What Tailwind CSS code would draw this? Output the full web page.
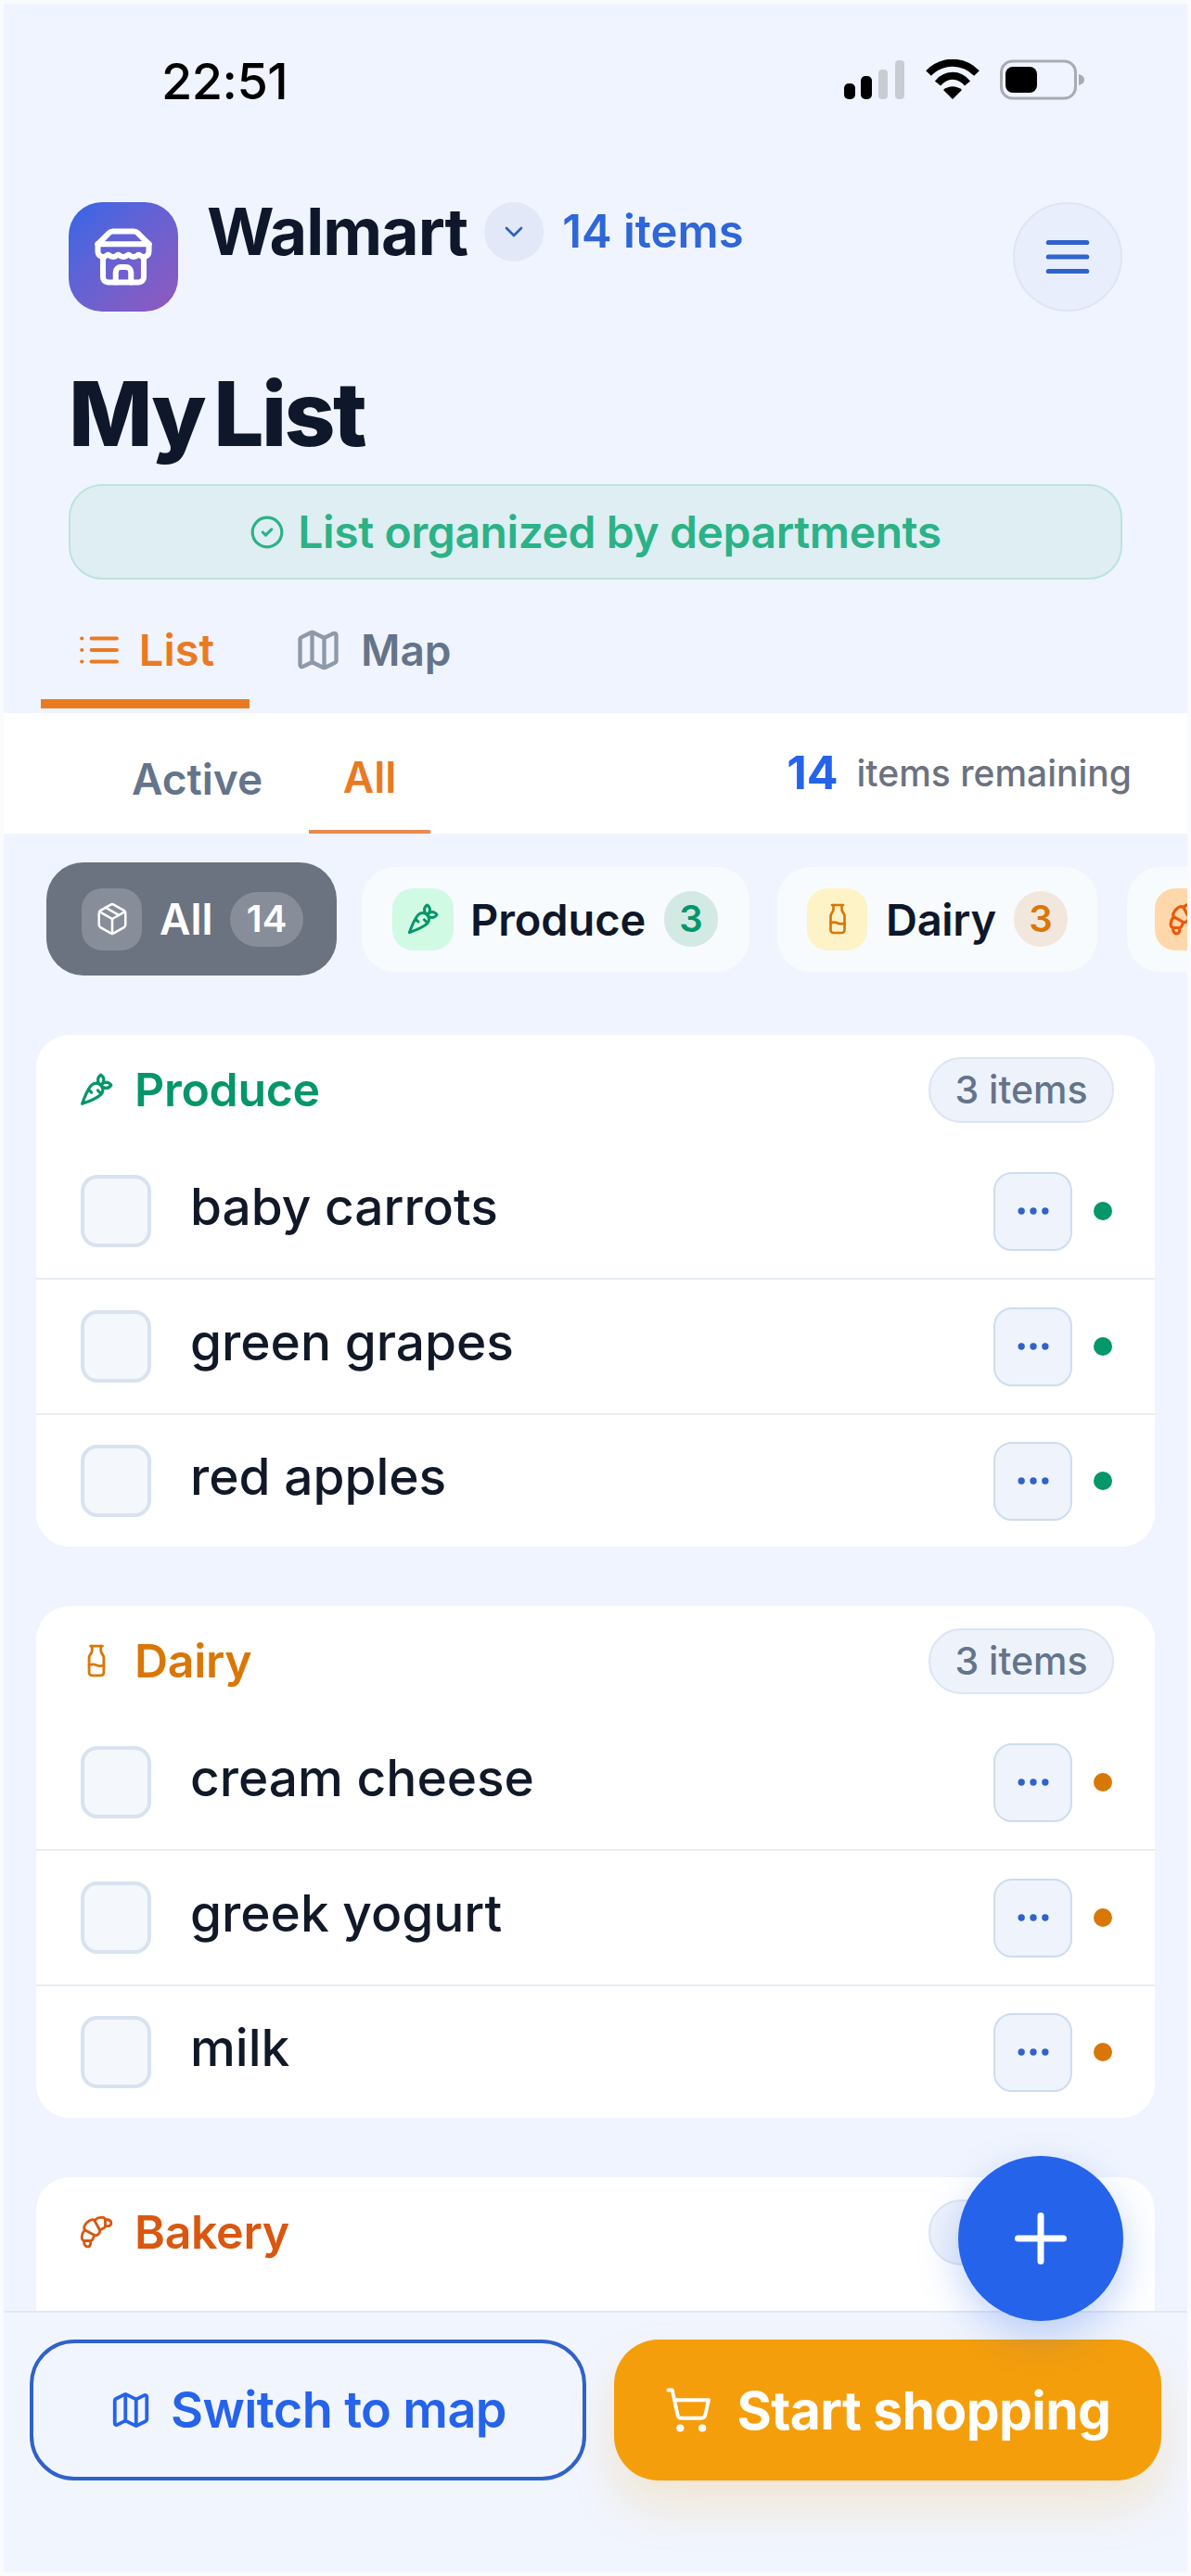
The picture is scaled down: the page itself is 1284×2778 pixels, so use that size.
<!DOCTYPE html>
<html lang="en">
<head>
<meta charset="utf-8">
<script src="https://cdn.jsdelivr.net/npm/@tailwindcss/browser@4"></script>
<title>My List</title>
</head>
<body class="m-0">
<div class="relative w-[1284px] h-[2778px] overflow-hidden flex flex-col bg-[#f0f4fe] font-['Inter',sans-serif] text-[#0f172a]">

  <!-- status bar -->
  <div class="flex items-center justify-between h-[52px] mt-[62px] pl-[174px] pr-[114px]">
    <span class="text-[54px] leading-[52px] font-medium text-black tracking-[-0.5px]">22:51</span>
    <div class="flex items-center gap-[22px] mb-[4px]">
      <svg class="w-[66px] h-[42px]" viewBox="0 0 66 42"><rect x="0" y="25" width="12" height="17" rx="5" fill="#000"/><rect x="18" y="17" width="12" height="25" rx="5" fill="#000"/><rect x="37" y="10" width="10" height="32" rx="4" fill="#c9ccd2"/><rect x="55" y="0" width="10" height="42" rx="4" fill="#c9ccd2"/></svg>
      <svg class="w-[58px] h-[44px]" viewBox="0 0 58 44" fill="none" stroke="#000" stroke-width="8"><path d="M3 15C18 0 40 0 55 15"/><path d="M13 26C22 15 36 15 45 26"/><path d="M29 43 19 33C25 28 33 28 39 33Z" fill="#000" stroke="none"/></svg>
      <svg class="w-[92px] h-[44px]" viewBox="0 0 92 44" fill="none"><rect x="1.5" y="2" width="80" height="40" rx="12" stroke="#a8abb2" stroke-width="3"/><rect x="6" y="8" width="34" height="28" rx="8" fill="#000"/><path d="M85 16c4 1 6 3 6 6s-2 5-6 6z" fill="#a8abb2"/></svg>
    </div>
  </div>

  <!-- header -->
  <header class="flex flex-col px-[74px] mt-[104px]">
    <div class="flex items-start justify-between">
      <div class="flex items-start gap-[31px]">
        <div class="w-[118px] h-[118px] rounded-[36px] bg-linear-to-br from-[#2f66e6] to-[#9058bd] flex items-center justify-center">
          <svg class="w-[66px] h-[66px]" viewBox="0 0 24 24" fill="none" stroke="#fff" stroke-width="2.2" stroke-linecap="round" stroke-linejoin="round"><path d="m2 7 4.41-4.41A2 2 0 0 1 7.83 2h8.34a2 2 0 0 1 1.42.59L22 7"/><path d="M4 12v8a2 2 0 0 0 2 2h12a2 2 0 0 0 2-2v-8"/><path d="M15 22v-4a2 2 0 0 0-2-2h-2a2 2 0 0 0-2 2v4"/><path d="M2 7h20"/><path d="M22 7v3a2 2 0 0 1-2 2a2.7 2.7 0 0 1-1.59-.63.7.7 0 0 0-.82 0A2.7 2.7 0 0 1 16 12a2.7 2.7 0 0 1-1.59-.63.7.7 0 0 0-.82 0A2.7 2.7 0 0 1 12 12a2.7 2.7 0 0 1-1.59-.63.7.7 0 0 0-.82 0A2.7 2.7 0 0 1 8 12a2.7 2.7 0 0 1-1.59-.63.7.7 0 0 0-.82 0A2.7 2.7 0 0 1 4 12a2 2 0 0 1-2-2V7"/></svg>
        </div>
        <div class="flex items-center h-[64px]">
          <span class="text-[70px] leading-[64px] font-bold tracking-[-1px] text-[#0f172a]">Walmart</span>
          <span class="ml-[18px] w-[64px] h-[64px] rounded-full bg-[#e2e8f8] flex items-center justify-center">
            <svg class="w-[32px] h-[32px]" viewBox="0 0 24 24" fill="none" stroke="#2f5fc4" stroke-width="2" stroke-linecap="round" stroke-linejoin="round"><path d="m6 9 6 6 6-6"/></svg>
          </span>
          <span class="ml-[20px] text-[49px] leading-[64px] font-semibold text-[#2f66d8]">14 items</span>
        </div>
      </div>
      <button class="w-[118px] h-[118px] rounded-full bg-[#e8eefb] border-2 border-[#dfe5f4] flex items-center justify-center">
        <svg class="w-[62px] h-[62px]" viewBox="0 0 24 24" fill="none" stroke="#2f62cc" stroke-width="2" stroke-linecap="round"><path d="M4 6h16"/><path d="M4 12h16"/><path d="M4 18h16"/></svg>
      </button>
    </div>
    <h1 class="mt-[62px] text-[96px] leading-[96px] font-extrabold tracking-[-2.6px] [word-spacing:-8px] text-[#0f172a]">My List</h1>
    <div class="mt-[28px] h-[103px] rounded-[36px] bg-[#deeef2] border-2 border-[#bde3dc] flex items-center justify-center gap-[14px] text-[#2bb287]">
      <svg class="w-[38px] h-[38px]" viewBox="0 0 24 24" fill="none" stroke="currentColor" stroke-width="2" stroke-linecap="round" stroke-linejoin="round"><circle cx="12" cy="12" r="10"/><path d="m9 12 2 2 4-4"/></svg>
      <span class="text-[48px] leading-none font-semibold tracking-[-0.4px]">List organized by departments</span>
    </div>
  </header>

  <!-- view tabs -->
  <nav class="flex gap-[12px] pl-[44px] mt-[30px] h-[114px]">
    <div class="w-[225px] h-[109px] pb-[8px] border-b-[10px] border-[#ea7a22] flex items-center justify-center gap-[18px] text-[#ea7a22]">
      <svg class="w-[50px] h-[50px]" viewBox="0 0 24 24" fill="none" stroke="currentColor" stroke-width="2" stroke-linecap="round" stroke-linejoin="round"><path d="M3 12h.01"/><path d="M3 18h.01"/><path d="M3 6h.01"/><path d="M8 12h13"/><path d="M8 18h13"/><path d="M8 6h13"/></svg>
      <span class="text-[47px] leading-none font-semibold">List</span>
    </div>
    <div class="h-[99px] pb-[8px] pl-[36px] flex items-center gap-[20px] text-[#64748b]">
      <svg class="w-[52px] h-[52px] text-[#8d99ab]" viewBox="0 0 24 24" fill="none" stroke="currentColor" stroke-width="2" stroke-linecap="round" stroke-linejoin="round"><path d="M14.106 5.553a2 2 0 0 0 1.788 0l3.659-1.83A1 1 0 0 1 21 4.619v12.764a1 1 0 0 1-.553.894l-4.553 2.277a2 2 0 0 1-1.788 0l-4.212-2.106a2 2 0 0 0-1.788 0l-3.659 1.83A1 1 0 0 1 3 19.381V6.618a1 1 0 0 1 .553-.894l4.553-2.277a2 2 0 0 1 1.788 0z"/><path d="M15 5.764v15"/><path d="M9 3.236v15"/></svg>
      <span class="text-[46px] leading-none font-semibold">Map</span>
    </div>
  </nav>

  <!-- filter band -->
  <div class="h-[130px] bg-white flex items-center justify-between pl-[105px] pr-[64px]">
    <div class="flex h-full gap-[13px]">
      <div class="w-[215px] pt-[12px] flex items-center justify-center text-[46px] leading-none font-semibold text-[#64748b]">Active</div>
      <div class="w-[131px] pt-[12px] border-b-4 border-[#ea8a50] flex items-center justify-center text-[46px] leading-none font-semibold text-[#ea7a22]">All</div>
    </div>
    <div class="flex items-center gap-[20px] mb-[2px]">
      <span class="text-[50px] leading-none font-bold text-[#2563eb]">14</span>
      <span class="text-[39px] leading-none font-medium text-[#6b7280]">items remaining</span>
    </div>
  </div>

  <!-- main -->
  <main class="relative flex-1 overflow-hidden flex flex-col">
    <div class="flex items-center gap-[27px] pl-[50px] mt-[31px] w-[1400px]">
      <div class="h-[122px] w-[313px] shrink-0 rounded-[40px] bg-[#6b7280] flex items-center pl-[38px] text-white">
        <span class="w-[65px] h-[67px] rounded-[22px] bg-white/20 flex items-center justify-center">
          <svg class="w-[38px] h-[38px]" viewBox="0 0 24 24" fill="none" stroke="currentColor" stroke-width="1.6" stroke-linecap="round" stroke-linejoin="round"><path d="M11 21.73a2 2 0 0 0 2 0l7-4A2 2 0 0 0 21 16V8a2 2 0 0 0-1-1.73l-7-4a2 2 0 0 0-2 0l-7 4A2 2 0 0 0 3 8v8a2 2 0 0 0 1 1.73z"/><path d="M12 22V12"/><path d="m3.3 7 8.7 5 8.7-5"/><path d="m7.5 4.27 9 5.15"/></svg>
        </span>
        <span class="ml-[19px] w-[58px] text-[46px] leading-none font-semibold">All</span>
        <span class="ml-[18px] w-[79px] h-[59px] rounded-[30px] bg-white/20 flex items-center justify-center text-[40px] leading-none font-semibold">14</span>
      </div>
      <div class="h-[113px] w-[418px] shrink-0 rounded-[36px] bg-[#f8fbfd] flex items-center pl-[33px]">
        <span class="w-[66px] h-[67px] rounded-[22px] bg-[#d1fae5] flex items-center justify-center text-[#059669]">
          <svg class="w-[36px] h-[36px]" viewBox="0 0 24 24" fill="none" stroke="currentColor" stroke-width="2" stroke-linecap="round" stroke-linejoin="round"><path d="M2.27 21.7s9.87-3.5 12.73-6.36a4.5 4.5 0 0 0-6.36-6.37C5.77 11.84 2.27 21.7 2.27 21.7zM8.64 14l-2.05-2.04M15.34 15l-2.46-2.46"/><path d="M22 9s-1.33-2-3.5-2C16.86 7 15 9 15 9s1.33 2 3.5 2S22 9 22 9z"/><path d="M15 2s-2 1.33-2 3.5S15 9 15 9s2-1.84 2-3.5C17 3.33 15 2 15 2z"/></svg>
        </span>
        <span class="ml-[18px] w-[191px] text-[47px] leading-none font-semibold tracking-[-0.1px]">Produce</span>
        <span class="ml-[18px] w-[58px] h-[60px] rounded-[30px] bg-[#d3e9e4] flex items-center justify-center text-[40px] leading-none font-semibold text-[#059669]">3</span>
      </div>
      <div class="h-[113px] w-[345px] shrink-0 ml-[3px] rounded-[36px] bg-[#f8fbfd] flex items-center pl-[32px]">
        <span class="w-[65px] h-[67px] rounded-[22px] bg-[#fef3c7] flex items-center justify-center text-[#d97706]">
          <svg class="w-[36px] h-[36px]" viewBox="0 0 24 24" fill="none" stroke="currentColor" stroke-width="1.8" stroke-linecap="round" stroke-linejoin="round"><path d="M8 2h8"/><path d="M9 2v2.789a4 4 0 0 1-.672 2.219l-.656.984A4 4 0 0 0 7 10.212V20a2 2 0 0 0 2 2h6a2 2 0 0 0 2-2v-9.789a4 4 0 0 0-.672-2.219l-.656-.984A4 4 0 0 1 15 4.788V2"/><path d="M7 15a6.472 6.472 0 0 1 5 0 6.47 6.47 0 0 0 5 0"/></svg>
        </span>
        <span class="ml-[20px] w-[118px] text-[47px] leading-none font-semibold tracking-[-0.3px]">Dairy</span>
        <span class="ml-[20px] w-[58px] h-[60px] rounded-[30px] bg-[#f1e7dd] flex items-center justify-center text-[40px] leading-none font-semibold text-[#d97706]">3</span>
      </div>
      <div class="h-[113px] w-[200px] shrink-0 ml-[5px] rounded-[36px] bg-[#f8fbfd] flex items-center pl-[30px]">
        <span class="w-[65px] h-[67px] rounded-[22px] bg-[#fed7aa] flex items-center justify-center text-[#ea580c]">
          <svg class="w-[38px] h-[38px] rotate-90" viewBox="0 0 24 24" fill="none" stroke="currentColor" stroke-width="2" stroke-linecap="round" stroke-linejoin="round"><path d="m4.6 13.11 5.79-3.21c1.89-1.05 4.79 1.78 3.71 3.71l-3.22 5.81C8.8 23.16.79 15.23 4.6 13.11Z"/><path d="m10.5 9.5-1-2.29C9.2 6.48 8.8 6 8 6H4.5C2.79 6 2 6.5 2 8.5a7.71 7.71 0 0 0 2 4.83"/><path d="M8 6c0-1.55.24-4-2-4-2 0-2.5 2.17-2.5 4"/><path d="m14.5 13.5 2.29 1c.73.3 1.21.7 1.21 1.5v3.5c0 1.71-.5 2.5-2.5 2.5a7.71 7.71 0 0 1-4.83-2"/><path d="M18 16c1.55 0 4-.24 4 2 0 2-2.17 2.5-4 2.5"/></svg>
        </span>
      </div>
    </div>

    <div class="flex flex-col gap-[64px] mx-[39px] mt-[64px]">
      <!-- Produce -->
      <section class="rounded-[36px] bg-white shrink-0">
        <div class="h-[118px] flex items-center justify-between pl-[46px] pr-[44px] text-[#059669]">
          <div class="flex items-center gap-[22px]">
            <svg class="w-[38px] h-[38px]" viewBox="0 0 24 24" fill="none" stroke="currentColor" stroke-width="2" stroke-linecap="round" stroke-linejoin="round"><path d="M2.27 21.7s9.87-3.5 12.73-6.36a4.5 4.5 0 0 0-6.36-6.37C5.77 11.84 2.27 21.7 2.27 21.7zM8.64 14l-2.05-2.04M15.34 15l-2.46-2.46"/><path d="M22 9s-1.33-2-3.5-2C16.86 7 15 9 15 9s1.33 2 3.5 2S22 9 22 9z"/><path d="M15 2s-2 1.33-2 3.5S15 9 15 9s2-1.84 2-3.5C17 3.33 15 2 15 2z"/></svg>
            <span class="text-[50px] leading-none font-semibold tracking-[-0.3px]">Produce</span>
          </div>
          <span class="h-[71px] w-[200px] rounded-full bg-[#eef2fb] border-2 border-[#dde4f3] flex items-center justify-center text-[41px] leading-none font-medium text-[#64748b]">3 items</span>
        </div>
        <div class="h-[146px] flex items-center pl-[48px] pr-[46px] border-b-2 border-[#e8edf3]">
          <span class="w-[76px] h-[78px] rounded-[18px] bg-[#f4f7fc] border-4 border-[#d9e2ef]"></span>
          <span class="ml-[42px] mb-[10px] flex-1 text-[55px] leading-none font-[550] text-[#111827]">baby carrots</span>
          <button class="w-[85px] h-[85px] rounded-[20px] bg-[#eef3fc] border-2 border-[#cfdcf0] flex items-center justify-center"><svg class="w-[44px] h-[44px]" viewBox="0 0 24 24" fill="#2f62cc"><circle cx="5" cy="12" r="2"/><circle cx="12" cy="12" r="2"/><circle cx="19" cy="12" r="2"/></svg></button>
          <span class="ml-[23px] w-[20px] h-[20px] rounded-full bg-[#059669]"></span>
        </div>
        <div class="h-[146px] flex items-center pl-[48px] pr-[46px] border-b-2 border-[#e8edf3]">
          <span class="w-[76px] h-[78px] rounded-[18px] bg-[#f4f7fc] border-4 border-[#d9e2ef]"></span>
          <span class="ml-[42px] mb-[10px] flex-1 text-[55px] leading-none font-[550] text-[#111827]">green grapes</span>
          <button class="w-[85px] h-[85px] rounded-[20px] bg-[#eef3fc] border-2 border-[#cfdcf0] flex items-center justify-center"><svg class="w-[44px] h-[44px]" viewBox="0 0 24 24" fill="#2f62cc"><circle cx="5" cy="12" r="2"/><circle cx="12" cy="12" r="2"/><circle cx="19" cy="12" r="2"/></svg></button>
          <span class="ml-[23px] w-[20px] h-[20px] rounded-full bg-[#059669]"></span>
        </div>
        <div class="h-[142px] flex items-center pl-[48px] pr-[46px]">
          <span class="w-[76px] h-[78px] rounded-[18px] bg-[#f4f7fc] border-4 border-[#d9e2ef]"></span>
          <span class="ml-[42px] mb-[10px] flex-1 text-[55px] leading-none font-[550] text-[#111827]">red apples</span>
          <button class="w-[85px] h-[85px] rounded-[20px] bg-[#eef3fc] border-2 border-[#cfdcf0] flex items-center justify-center"><svg class="w-[44px] h-[44px]" viewBox="0 0 24 24" fill="#2f62cc"><circle cx="5" cy="12" r="2"/><circle cx="12" cy="12" r="2"/><circle cx="19" cy="12" r="2"/></svg></button>
          <span class="ml-[23px] w-[20px] h-[20px] rounded-full bg-[#059669]"></span>
        </div>
      </section>

      <!-- Dairy -->
      <section class="rounded-[36px] bg-white shrink-0">
        <div class="h-[118px] flex items-center justify-between pl-[46px] pr-[44px] text-[#d97706]">
          <div class="flex items-center gap-[22px]">
            <svg class="w-[38px] h-[38px]" viewBox="0 0 24 24" fill="none" stroke="currentColor" stroke-width="1.8" stroke-linecap="round" stroke-linejoin="round"><path d="M8 2h8"/><path d="M9 2v2.789a4 4 0 0 1-.672 2.219l-.656.984A4 4 0 0 0 7 10.212V20a2 2 0 0 0 2 2h6a2 2 0 0 0 2-2v-9.789a4 4 0 0 0-.672-2.219l-.656-.984A4 4 0 0 1 15 4.788V2"/><path d="M7 15a6.472 6.472 0 0 1 5 0 6.47 6.47 0 0 0 5 0"/></svg>
            <span class="text-[50px] leading-none font-semibold tracking-[-0.3px]">Dairy</span>
          </div>
          <span class="h-[71px] w-[200px] rounded-full bg-[#eef2fb] border-2 border-[#dde4f3] flex items-center justify-center text-[41px] leading-none font-medium text-[#64748b]">3 items</span>
        </div>
        <div class="h-[146px] flex items-center pl-[48px] pr-[46px] border-b-2 border-[#e8edf3]">
          <span class="w-[76px] h-[78px] rounded-[18px] bg-[#f4f7fc] border-4 border-[#d9e2ef]"></span>
          <span class="ml-[42px] mb-[10px] flex-1 text-[55px] leading-none font-[550] text-[#111827]">cream cheese</span>
          <button class="w-[85px] h-[85px] rounded-[20px] bg-[#eef3fc] border-2 border-[#cfdcf0] flex items-center justify-center"><svg class="w-[44px] h-[44px]" viewBox="0 0 24 24" fill="#2f62cc"><circle cx="5" cy="12" r="2"/><circle cx="12" cy="12" r="2"/><circle cx="19" cy="12" r="2"/></svg></button>
          <span class="ml-[23px] w-[20px] h-[20px] rounded-full bg-[#d97706]"></span>
        </div>
        <div class="h-[146px] flex items-center pl-[48px] pr-[46px] border-b-2 border-[#e8edf3]">
          <span class="w-[76px] h-[78px] rounded-[18px] bg-[#f4f7fc] border-4 border-[#d9e2ef]"></span>
          <span class="ml-[42px] mb-[10px] flex-1 text-[55px] leading-none font-[550] text-[#111827]">greek yogurt</span>
          <button class="w-[85px] h-[85px] rounded-[20px] bg-[#eef3fc] border-2 border-[#cfdcf0] flex items-center justify-center"><svg class="w-[44px] h-[44px]" viewBox="0 0 24 24" fill="#2f62cc"><circle cx="5" cy="12" r="2"/><circle cx="12" cy="12" r="2"/><circle cx="19" cy="12" r="2"/></svg></button>
          <span class="ml-[23px] w-[20px] h-[20px] rounded-full bg-[#d97706]"></span>
        </div>
        <div class="h-[142px] flex items-center pl-[48px] pr-[46px]">
          <span class="w-[76px] h-[78px] rounded-[18px] bg-[#f4f7fc] border-4 border-[#d9e2ef]"></span>
          <span class="ml-[42px] mb-[10px] flex-1 text-[55px] leading-none font-[550] text-[#111827]">milk</span>
          <button class="w-[85px] h-[85px] rounded-[20px] bg-[#eef3fc] border-2 border-[#cfdcf0] flex items-center justify-center"><svg class="w-[44px] h-[44px]" viewBox="0 0 24 24" fill="#2f62cc"><circle cx="5" cy="12" r="2"/><circle cx="12" cy="12" r="2"/><circle cx="19" cy="12" r="2"/></svg></button>
          <span class="ml-[23px] w-[20px] h-[20px] rounded-full bg-[#d97706]"></span>
        </div>
      </section>

      <!-- Bakery -->
      <section class="rounded-[36px] bg-white shrink-0 h-[300px]">
        <div class="h-[118px] flex items-center justify-between pl-[46px] pr-[44px] text-[#d9570f]">
          <div class="flex items-center gap-[22px]">
            <svg class="w-[38px] h-[38px] rotate-90" viewBox="0 0 24 24" fill="none" stroke="currentColor" stroke-width="1.8" stroke-linecap="round" stroke-linejoin="round"><path d="m4.6 13.11 5.79-3.21c1.89-1.05 4.79 1.78 3.71 3.71l-3.22 5.81C8.8 23.16.79 15.23 4.6 13.11Z"/><path d="m10.5 9.5-1-2.29C9.2 6.48 8.8 6 8 6H4.5C2.79 6 2 6.5 2 8.5a7.71 7.71 0 0 0 2 4.83"/><path d="M8 6c0-1.55.24-4-2-4-2 0-2.5 2.17-2.5 4"/><path d="m14.5 13.5 2.29 1c.73.3 1.21.7 1.21 1.5v3.5c0 1.71-.5 2.5-2.5 2.5a7.71 7.71 0 0 1-4.83-2"/><path d="M18 16c1.55 0 4-.24 4 2 0 2-2.17 2.5-4 2.5"/></svg>
            <span class="text-[50px] leading-none font-semibold tracking-[-0.3px]">Bakery</span>
          </div>
          <span class="h-[71px] w-[200px] rounded-full bg-[#eef2fb] border-2 border-[#dde4f3]"></span>
        </div>
      </section>
    </div>
  </main>

  <!-- footer -->
  <footer class="h-[286px] shrink-0 bg-[#f1f5fe] border-t-2 border-[#e2e8f3] flex items-start gap-[30px] px-[32px] pt-[29px]">
    <button class="w-[600px] h-[152px] rounded-[48px] border-4 border-[#2f62c8] flex items-center justify-center gap-[20px] text-[#2563eb]">
      <svg class="w-[46px] h-[46px]" viewBox="0 0 24 24" fill="none" stroke="currentColor" stroke-width="2" stroke-linecap="round" stroke-linejoin="round"><path d="M14.106 5.553a2 2 0 0 0 1.788 0l3.659-1.83A1 1 0 0 1 21 4.619v12.764a1 1 0 0 1-.553.894l-4.553 2.277a2 2 0 0 1-1.788 0l-4.212-2.106a2 2 0 0 0-1.788 0l-3.659 1.83A1 1 0 0 1 3 19.381V6.618a1 1 0 0 1 .553-.894l4.553-2.277a2 2 0 0 1 1.788 0z"/><path d="M15 5.764v15"/><path d="M9 3.236v15"/></svg>
      <span class="text-[54px] leading-none font-semibold tracking-[-0.6px]">Switch to map</span>
    </button>
    <button class="w-[590px] h-[152px] rounded-[48px] bg-[#f59e0b] flex items-center justify-center gap-[26px] text-white shadow-[0_28px_50px_rgba(245,158,11,0.18)]">
      <svg class="w-[52px] h-[52px]" viewBox="0 0 24 24" fill="none" stroke="currentColor" stroke-width="1.8" stroke-linecap="round" stroke-linejoin="round"><circle cx="8" cy="21" r="1"/><circle cx="19" cy="21" r="1"/><path d="M2.05 2.05h2l2.66 12.42a2 2 0 0 0 2 1.58h9.78a2 2 0 0 0 1.95-1.57l1.65-7.43H5.12"/></svg>
      <span class="text-[57px] leading-none font-bold tracking-[-0.6px]">Start shopping</span>
    </button>
  </footer>

  <!-- floating add button -->
  <button class="absolute left-[1033px] top-[2325px] w-[178px] h-[178px] rounded-full bg-[#2563eb] flex items-center justify-center shadow-[0_16px_44px_rgba(37,99,235,0.28)]">
    <svg class="w-[84px] h-[84px]" viewBox="0 0 24 24" fill="none" stroke="#fff" stroke-width="2" stroke-linecap="round"><path d="M5 12h14"/><path d="M12 5v14"/></svg>
  </button>

  <!-- screenshot edge -->
  <div class="absolute inset-0 border-[4px] border-[#f9fbfd] pointer-events-none"></div>
</div>
</body>
</html>
